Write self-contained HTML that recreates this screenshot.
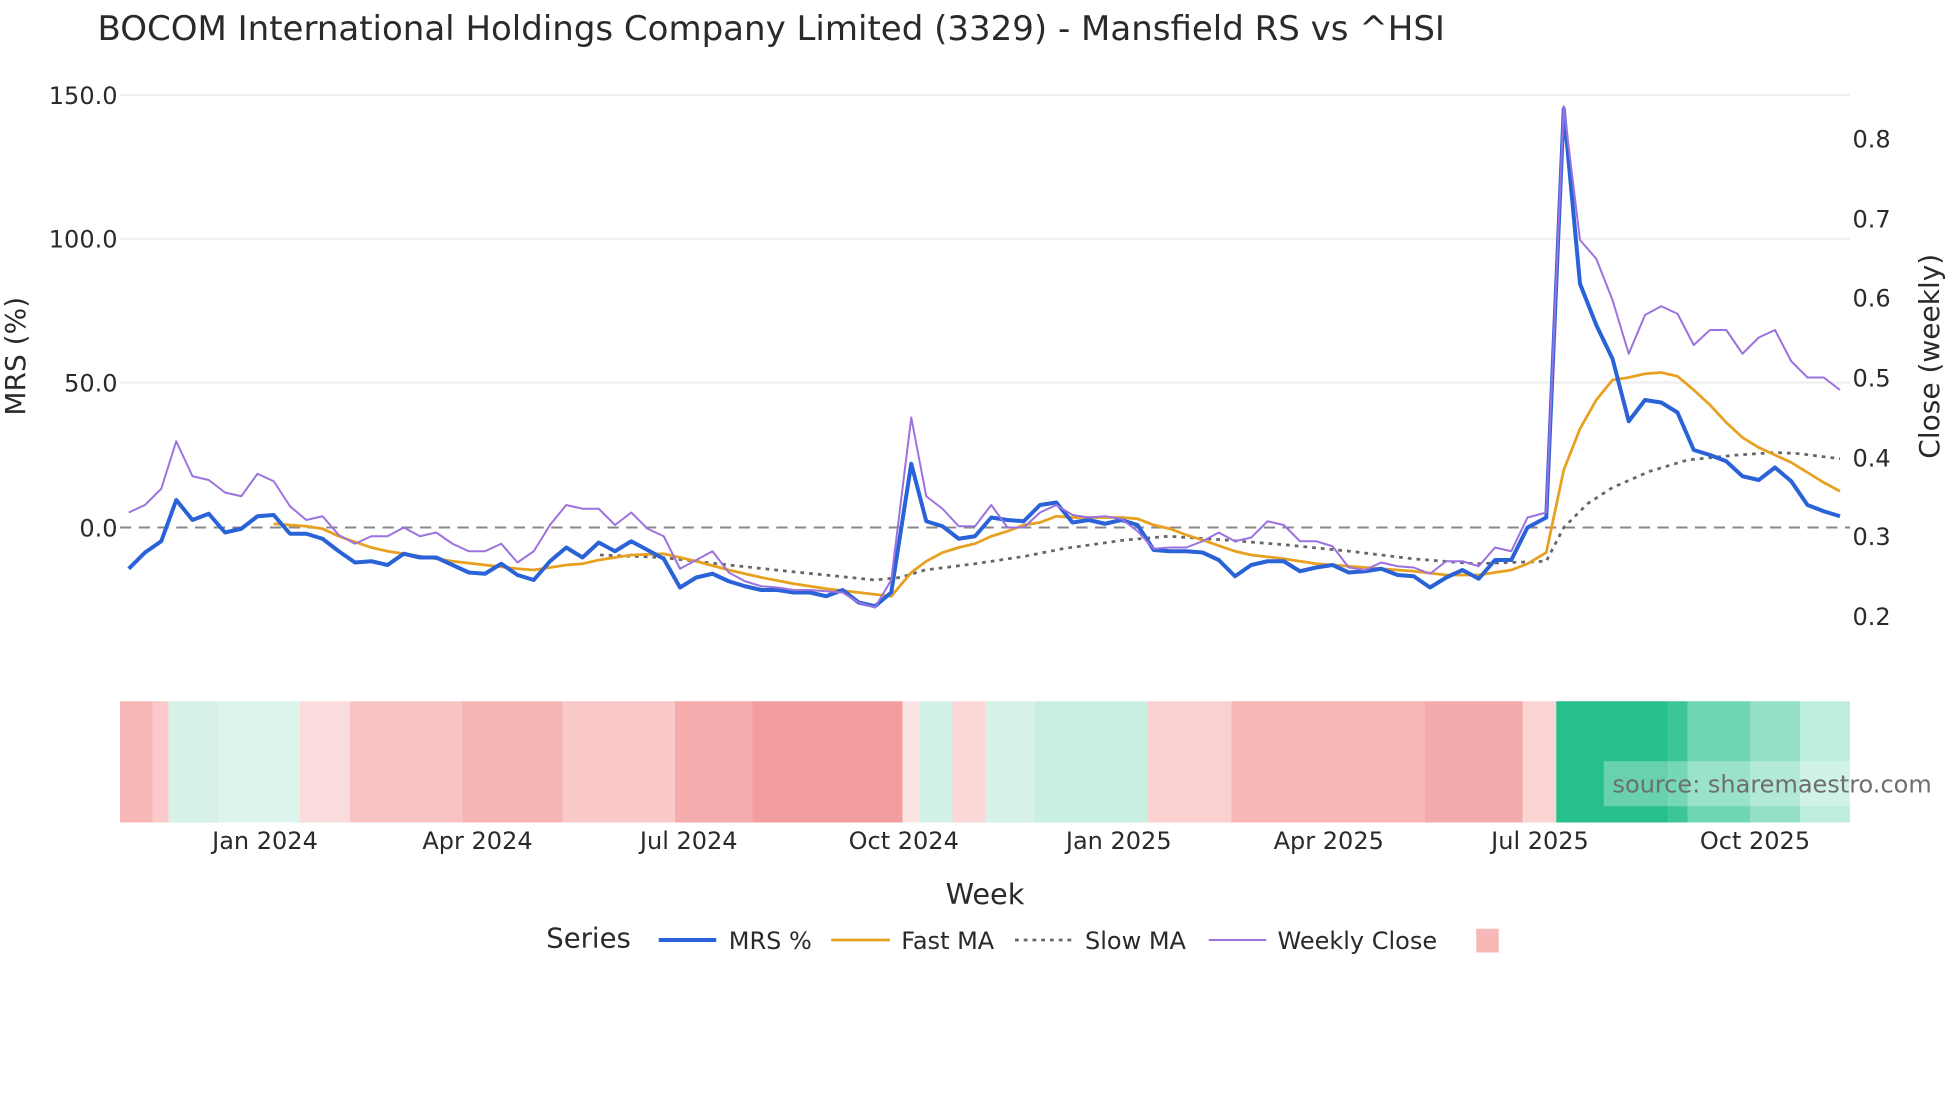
<!DOCTYPE html>
<html><head><meta charset="utf-8"><style>
html,body{margin:0;padding:0;background:#fff;width:1960px;height:1102px;overflow:hidden}
svg{display:block}
text{font-family:"DejaVu Sans","Liberation Sans",sans-serif;fill:#2a2a2a}
</style></head><body>
<svg width="1960" height="1102" viewBox="0 0 1568 881.6" xmlns="http://www.w3.org/2000/svg">
<rect width="1568" height="882" fill="#fff"/>
<text x="78" y="32" font-size="27.2">BOCOM International Holdings Company Limited (3329) - Mansfield RS vs ^HSI</text>
<g stroke="#f0f0f0" stroke-width="2">
<line x1="96" y1="76" x2="1480" y2="76"/><line x1="96" y1="191" x2="1480" y2="191"/><line x1="96" y1="306" x2="1480" y2="306"/>
</g>
<line x1="96" y1="422" x2="1480" y2="422" stroke="#888" stroke-width="1.6" stroke-dasharray="9,6"/>
<g font-size="19.2" text-anchor="end">
<text x="94" y="83">150.0</text><text x="94" y="198">100.0</text><text x="94" y="313">50.0</text><text x="94" y="429">0.0</text>
</g>
<g font-size="19.2">
<text x="1482" y="118">0.8</text><text x="1482" y="182">0.7</text><text x="1482" y="245">0.6</text><text x="1482" y="309">0.5</text><text x="1482" y="373">0.4</text><text x="1482" y="436">0.3</text><text x="1482" y="500">0.2</text>
</g>
<text transform="translate(20,285) rotate(-90)" font-size="22.4" text-anchor="middle">MRS (%)</text>
<text transform="translate(1551,285) rotate(-90)" font-size="22.4" text-anchor="middle">Close (weekly)</text>
<g>
<rect x="96" y="561" width="27" height="97" fill="#f9b8b8"/>
<rect x="122" y="561" width="13" height="97" fill="#fbcaca"/>
<rect x="135" y="561" width="40" height="97" fill="#d6f2e8"/>
<rect x="175" y="561" width="65" height="97" fill="#dcf4ec"/>
<rect x="240" y="561" width="40" height="97" fill="#fbdcdc"/>
<rect x="280" y="561" width="90" height="97" fill="#f8c3c3"/>
<rect x="370" y="561" width="80" height="97" fill="#f6b5b5"/>
<rect x="450" y="561" width="90" height="97" fill="#fac9c9"/>
<rect x="540" y="561" width="62" height="97" fill="#f5acac"/>
<rect x="602" y="561" width="120" height="97" fill="#f39e9e"/>
<rect x="722" y="561" width="14" height="97" fill="#fde4e4"/>
<rect x="736" y="561" width="26" height="97" fill="#d3f2e7"/>
<rect x="762" y="561" width="26" height="97" fill="#fbd8d8"/>
<rect x="788" y="561" width="40" height="97" fill="#d6f2e8"/>
<rect x="828" y="561" width="90" height="97" fill="#c9efe1"/>
<rect x="918" y="561" width="67" height="97" fill="#fad0d0"/>
<rect x="985" y="561" width="155" height="97" fill="#f7b7b7"/>
<rect x="1140" y="561" width="78" height="97" fill="#f4aaaa"/>
<rect x="1218" y="561" width="27" height="97" fill="#fcd4d4"/>
<rect x="1245" y="561" width="90" height="97" fill="#27bf8c"/>
<rect x="1335" y="561" width="15" height="97" fill="#3cc698"/>
<rect x="1350" y="561" width="50" height="97" fill="#6fd6b2"/>
<rect x="1400" y="561" width="40" height="97" fill="#93e0c6"/>
<rect x="1440" y="561" width="40" height="97" fill="#bdeddc"/>
</g>
<rect x="1283" y="609" width="197" height="36" fill="#fff" fill-opacity="0.3"/>
<text x="1290" y="634" font-size="19.2" style="fill:#6e6e6e">source: sharemaestro.com</text>
<g font-size="19.2" text-anchor="middle">
<text x="212" y="679">Jan 2024</text><text x="382" y="679">Apr 2024</text><text x="551" y="679">Jul 2024</text><text x="723" y="679">Oct 2024</text>
<text x="895" y="679">Jan 2025</text><text x="1063" y="679">Apr 2025</text><text x="1232" y="679">Jul 2025</text><text x="1404" y="679">Oct 2025</text>
</g>
<text x="788" y="723" font-size="23" text-anchor="middle">Week</text>
<polyline fill="none" stroke="#666" stroke-width="2.2" stroke-dasharray="3,4" points="480,444 530,446 583,452 640,458 700,464 720,462 740,456 780,451 820,445 850,439 900,432 935,429 980,432 1030,436 1080,441 1130,447 1180,451 1237,449 1251,422 1270,403 1290,390 1320,377 1350,368 1390,364 1420,362 1440,363 1472,367"/>
<polyline fill="none" stroke="#e8a020" stroke-width="2.2" points="219,419 245,421 258,423 271,429 297,438 310,441 336,445 362,449 388,452 414,455 427,456 453,452 466,451 479,448 505,444 531,443 557,449 583,456 609,462 635,467 661,471 687,474 713,477 729,458 741,449 754,442 767,438 780,435 793,429 806,425 819,420 832,418 845,413 858,414 897,414 910,415 923,420 936,423 949,428 962,432 988,441 1001,444 1027,447 1053,451 1079,453 1105,455 1131,457 1157,460 1183,460 1196,458 1209,456 1222,451 1237,442 1251,376 1264,343 1277,320 1290,304 1303,302 1316,299 1329,298 1342,301 1355,312 1368,324 1381,338 1394,350 1407,358 1420,364 1433,370 1446,378 1459,386 1472,393"/>
<polyline fill="none" stroke="#2a62d8" stroke-width="3.2" stroke-linejoin="round" points="103,455 116,442 129,433 141,400 154,416 167,411 180,426 193,423 206,413 219,412 232,427 245,427 258,431 271,441 284,450 297,449 310,452 323,443 336,446 349,446 362,452 375,458 388,459 401,451 414,460 427,464 440,449 453,438 466,446 479,434 492,441 505,433 518,440 531,447 544,470 557,462 570,459 583,465 596,469 609,472 622,472 635,474 648,474 661,477 674,472 687,482 700,485 713,474 729,371 741,417 754,421 767,431 780,429 793,414 806,416 819,417 832,404 845,402 858,418 871,416 884,419 897,416 910,420 923,440 936,441 949,441 962,442 975,448 988,461 1001,452 1014,449 1027,449 1040,457 1053,454 1066,452 1079,458 1092,457 1105,455 1118,460 1131,461 1144,470 1157,462 1170,456 1183,463 1196,448 1209,448 1222,422 1237,414 1251,87 1264,227 1277,260 1290,287 1303,337 1316,320 1329,322 1342,330 1355,360 1368,364 1381,369 1394,381 1407,384 1420,374 1433,385 1446,404 1459,409 1472,413"/>
<polyline fill="none" stroke="#9b72e0" stroke-width="1.6" stroke-linejoin="round" points="103,410 116,404 129,391 141,353 154,381 167,384 180,394 193,397 206,379 219,385 232,405 245,416 258,413 271,428 284,435 297,429 310,429 323,422 336,429 349,426 362,435 375,441 388,441 401,435 414,450 427,441 440,420 453,404 466,407 479,407 492,420 505,410 518,423 531,429 544,455 557,448 570,441 583,458 596,465 609,469 622,470 635,472 648,472 661,473 674,474 687,482 700,486 713,464 729,334 741,397 754,407 767,421 780,421 793,404 806,422 819,422 832,410 845,404 858,412 871,414 884,413 897,415 910,425 923,439 936,438 949,438 962,433 975,426 988,433 1001,430 1014,417 1027,420 1040,433 1053,433 1066,437 1079,454 1092,456 1105,450 1118,453 1131,454 1144,459 1157,449 1170,449 1183,453 1196,438 1209,441 1222,414 1237,410 1251,85 1264,192 1277,207 1290,240 1303,283 1316,252 1329,245 1342,251 1355,276 1368,264 1381,264 1394,283 1407,270 1420,264 1433,289 1446,302 1459,302 1472,312"/>
<text x="437" y="758" font-size="22">Series</text>
<line x1="527" y1="752" x2="573" y2="752" stroke="#2a62d8" stroke-width="3.2"/>
<text x="583" y="759" font-size="19.2">MRS %</text>
<line x1="665" y1="752" x2="712" y2="752" stroke="#e8a020" stroke-width="2.2"/>
<text x="721" y="759" font-size="19.2">Fast MA</text>
<line x1="812" y1="752" x2="858" y2="752" stroke="#666" stroke-width="2.2" stroke-dasharray="3,4"/>
<text x="868" y="759" font-size="19.2">Slow MA</text>
<line x1="967" y1="752" x2="1013" y2="752" stroke="#9b72e0" stroke-width="1.6"/>
<text x="1022" y="759" font-size="19.2">Weekly Close</text>
<rect x="1181" y="743" width="18" height="19" fill="#f9b8b8"/>
</svg>
</body></html>
